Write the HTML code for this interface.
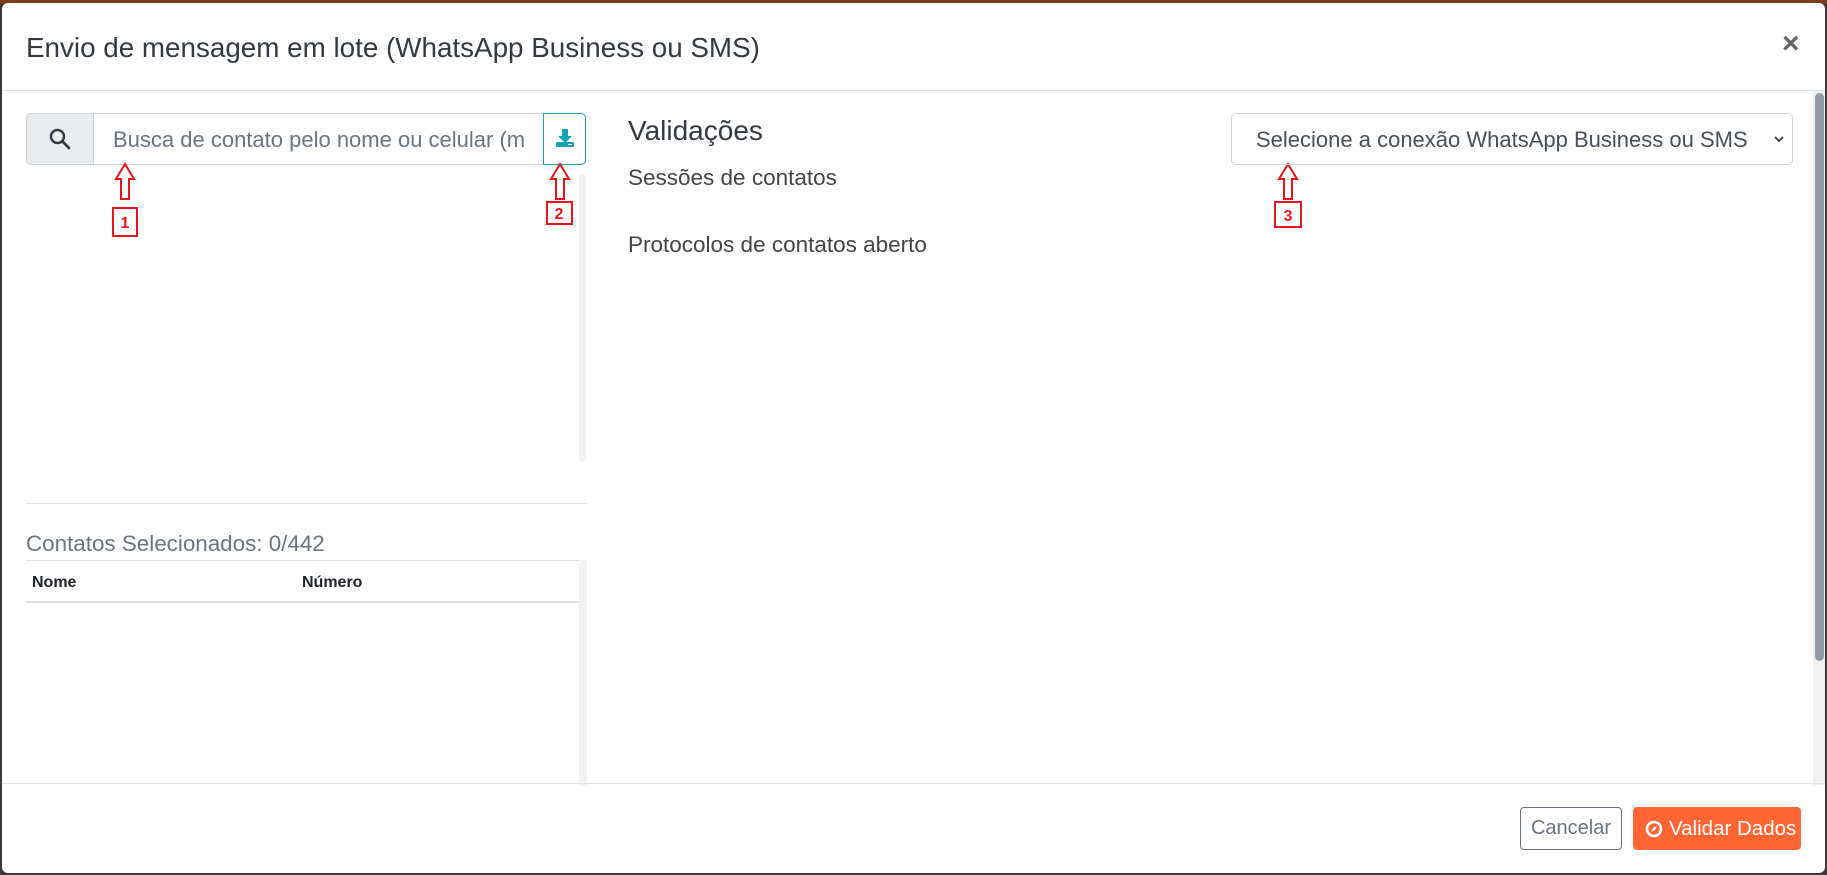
<!DOCTYPE html>
<html><head><meta charset="utf-8"><style>
*{box-sizing:border-box;margin:0;padding:0}
body{width:1827px;height:875px;background:#3a3a3a;font-family:"Liberation Sans",sans-serif;position:relative;overflow:hidden}
.top{position:absolute;left:0;top:0;width:1827px;height:4px;background:#7b3a1c}
.modal{position:absolute;left:2px;top:3px;width:1823px;height:870px;background:#fff;border-radius:6px;overflow:hidden}
.abs{position:absolute}
</style></head><body>
<div class="top"></div>
<div class="modal">
  <div class="abs" style="left:24px;top:29px;font-size:27.8px;color:#343a40">Envio de mensagem em lote (WhatsApp Business ou SMS)</div>
  <div class="abs" style="left:1780px;top:24px;font-size:30px;font-weight:bold;color:#666">×</div>
  <div class="abs" style="left:0;top:87px;width:1823px;height:1px;background:#dee2e6"></div>
  <div class="abs" style="left:1811px;top:88px;width:12px;height:694px;background:#f1f1f1"></div>
  <div class="abs" style="left:1813px;top:90px;width:9px;height:568px;background:#909ca6;border-radius:5px"></div>
  <div class="abs" style="left:24px;top:110px;width:68px;height:52px;background:#e9ecef;border:1px solid #ced4da;border-radius:5px 0 0 5px"></div>
  <svg class="abs" style="left:46px;top:124px" width="24" height="24" viewBox="0 0 24 24"><circle cx="9.5" cy="9.5" r="6.5" fill="none" stroke="#343a40" stroke-width="2.4"/><line x1="14.5" y1="14.5" x2="21" y2="21" stroke="#343a40" stroke-width="2.8" stroke-linecap="round"/></svg>
  <div class="abs" style="left:91px;top:110px;width:451px;height:52px;border:1px solid #ced4da;overflow:hidden;white-space:nowrap;padding:13px 0 0 19px;font-size:22px;color:#6c757d">Busca de contato pelo nome ou celular (m</div>
  <div class="abs" style="left:541px;top:110px;width:43px;height:52px;border:1px solid #17a2b8;border-radius:0 5px 5px 0;background:#fff"></div>
  <svg class="abs" style="left:552px;top:124px" width="22" height="22" viewBox="0 0 22 22"><rect x="8" y="2" width="6" height="7" fill="#17a2b8"/><polygon points="4,9 18,9 11,16" fill="#17a2b8"/><rect x="2" y="15" width="18" height="5" rx="1" fill="#17a2b8"/><rect x="14" y="17" width="4" height="1" fill="#fff"/></svg>
  <div class="abs" style="left:577px;top:172px;width:7px;height:286px;background:#f3f3f3"></div>
  <svg class="abs" style="left:0;top:0" width="1823" height="250">
    <g fill="#fff" stroke="#e8141c" stroke-width="2">
      <polygon points="123,161 114,176 119,176 119,196 127,196 127,176 132,176"/>
      <polygon points="558,161 549,176 554,176 554,196 562,196 562,176 567,176"/>
      <polygon points="1286,161 1277,176 1282,176 1282,196 1290,196 1290,176 1295,176"/>
      <rect x="111" y="205" width="24" height="28"/>
      <rect x="545" y="199" width="25" height="22"/>
      <rect x="1273" y="199" width="26" height="25"/>
    </g>
    <g fill="#e8141c" font-family="Liberation Sans,sans-serif" font-weight="bold" font-size="16" text-anchor="middle">
      <text x="123" y="225">1</text><text x="557" y="216">2</text><text x="1286" y="218">3</text>
    </g>
  </svg>
  <div class="abs" style="left:24px;top:500px;width:561px;height:1px;background:#e3e3e3"></div>
  <div class="abs" style="left:24px;top:528px;font-size:22.4px;color:#6c757d">Contatos Selecionados: 0/442</div>
  <div class="abs" style="left:24px;top:557px;width:553px;height:1px;background:#dee2e6"></div>
  <div class="abs" style="left:577px;top:557px;width:8px;height:225px;background:#f3f3f3"></div>
  <div class="abs" style="left:30px;top:571px;font-size:16px;font-weight:bold;color:#212529">Nome</div>
  <div class="abs" style="left:300px;top:571px;font-size:16px;font-weight:bold;color:#212529">Número</div>
  <div class="abs" style="left:24px;top:598px;width:553px;height:2px;background:#dee2e6"></div>
  <div class="abs" style="left:626px;top:112px;font-size:28px;color:#343a40">Validações</div>
  <div class="abs" style="left:626px;top:162px;font-size:22.5px;color:#444">Sessões de contatos</div>
  <div class="abs" style="left:626px;top:229px;font-size:22.5px;color:#444">Protocolos de contatos aberto</div>
  <div class="abs" style="left:1229px;top:110px;width:562px;height:52px;border:1px solid #ced4da;border-radius:5px;padding:13px 0 0 24px;font-size:22px;color:#495057;white-space:nowrap">Selecione a conexão WhatsApp Business ou SMS</div>
  <svg class="abs" style="left:1771px;top:131px" width="12" height="10" viewBox="0 0 12 10"><polyline points="2,3 6,7 10,3" fill="none" stroke="#343a40" stroke-width="1.8"/></svg>
  <div class="abs" style="left:0;top:780px;width:1823px;height:1px;background:#dee2e6"></div>
  <div class="abs" style="left:1518px;top:804px;width:102px;height:43px;border:1px solid #6c757d;border-radius:4px;font-size:20px;color:#6c757d;text-align:center;line-height:41px">Cancelar</div>
  <div class="abs" style="left:1631px;top:804px;width:168px;height:43px;background:#ff6633;border-radius:4px;font-size:20.5px;color:#fff;line-height:43px;padding-left:36px">Validar Dados</div>
  <svg class="abs" style="left:1643px;top:817px" width="18" height="18" viewBox="0 0 18 18"><circle cx="9" cy="9" r="7" fill="none" stroke="#fff" stroke-width="2.6"/><polygon points="12,6 10,10 6,12 8,8" fill="#fff"/></svg>
</div>
</body></html>
